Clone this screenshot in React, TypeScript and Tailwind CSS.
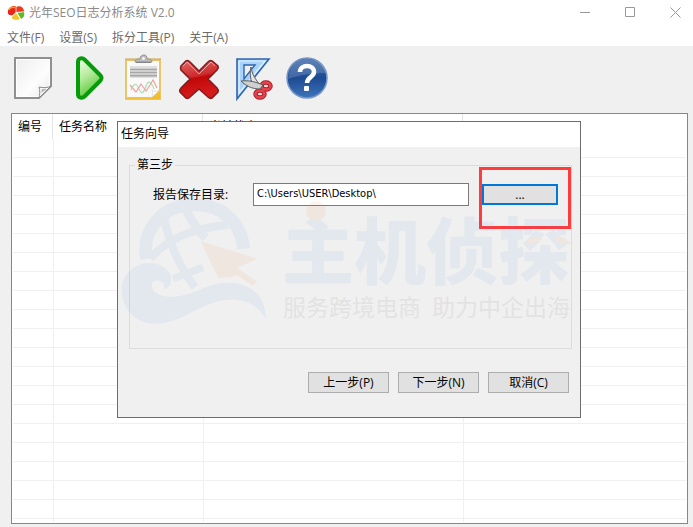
import { useState } from "react";

const menus = ["文件(F)", "设置(S)", "拆分工具(P)", "关于(A)"];
const columns = ["编号", "任务名称", "当前状态", ""];

function AppLogo() {
  return (
    <svg className="h-4 w-[18px]" viewBox="0 0 18 16">
      <path d="M1 6C2 1 8 0 9 2l0 5-3 3C2 11 0 9 1 6z" fill="#e8261c" />
      <path d="M9 2c5-2 8 1 8 5L9 7z" fill="#ee3a1c" />
      <path d="M10 7.500l7-.500c1 4-1 6-3 7z" fill="#5dbb22" />
      <path d="M9 8l4 6c-4 2-9 0-8-2z" fill="#f6c51b" />
      <path d="M9 2v5.500M9 7.500l8-.800M9 7.500L5 11.500M9.500 7.500l4.500 7" stroke="#fff" strokeWidth="0.7" fill="none" />
      <path d="M2 5c1-3 4-3 6-2.500" stroke="#ffa51f" strokeWidth="1.500" fill="none" />
    </svg>
  );
}

function PageIcon() {
  return (
    <>
      <defs>
        <linearGradient id="page" x1="0" y1="0" x2="1" y2="1">
          <stop offset="0" stopColor="#eee" />
          <stop offset="0.6" stopColor="#fdfdfd" />
          <stop offset="1" stopColor="#e6e6e6" />
        </linearGradient>
      </defs>
      <path d="M4 3h36v28L28 43H4z" fill="url(#page)" stroke="#909090" strokeWidth="2" />
      <path d="M5.500 4.500h33v26L27.500 41.500h-22z" fill="none" stroke="#fff" strokeWidth="1" />
      <path d="M28 43c1-3 1-8 0-11 4 1 9 1 12-1L28 43z" fill="#f6f6f6" stroke="#8a8a8a" strokeWidth="1" />
      <path d="M30 38l1-4h5z" fill="#b8b8b8" />
    </>
  );
}

function PlayIcon() {
  return (
    <>
      <defs>
        <linearGradient id="play" x1="0" y1="0" x2="0.4" y2="1">
          <stop offset="0" stopColor="#f4fff0" />
          <stop offset="0.5" stopColor="#b5eb9c" />
          <stop offset="1" stopColor="#58c936" />
        </linearGradient>
      </defs>
      <path
        d="M12 7c0-4 4-5 7-2l15 15c2 2 2 4 0 6L19 41c-3 3-7 2-7-2z"
        fill="url(#play)"
        stroke="#079a0b"
        strokeWidth="4"
        strokeLinejoin="round"
      />
    </>
  );
}

function ReportIcon() {
  return (
    <>
      <rect x="5" y="5" width="34" height="39" fill="#f9f9f9" stroke="#e9c468" strokeWidth="2" />
      <path d="M4 4h36" stroke="#c9a95d" strokeWidth="1" />
      <path d="M6 43h28" stroke="#f5c431" strokeWidth="2" />
      <path d="M39 34v10H29z" fill="#f2bd2c" />
      <path d="M30 43c2-3 2-5 1-8 3 2 5 2 8 0z" fill="#fff" stroke="#d4d4d4" strokeWidth="0.6" />
      <path d="M15 5h15v3H15z" fill="#777" />
      <path d="M14 7c0-3 3-3 5-3 0-3 2-4 4-4s3 1 3 4c2 0 5 0 5 3z" fill="#bcbcbc" stroke="#929292" />
      <circle cx="22.500" cy="3.500" r="1.300" fill="#fff" />
      <path d="M9 12h27M9 22h27" stroke="#c4c4c4" />
      <path d="M9 14.500h27M9 17.500h27M9 20.500h27" stroke="#a6a6a6" strokeWidth="2" />
      <path d="M10 35c3-7 5-8 8-1s5 3 7-3 5-5 8 3" stroke="#a5dfb0" strokeWidth="1.200" fill="none" />
      <path d="M9 30l6 7 5-8 5 7 4-6 3-5 4 8" stroke="#f0a0a0" strokeWidth="1.200" fill="none" />
    </>
  );
}

function DeleteIcon() {
  return (
    <>
      <defs>
        <linearGradient id="cross" x1="0" y1="0" x2="0.2" y2="1">
          <stop offset="0" stopColor="#e66a6a" />
          <stop offset="0.48" stopColor="#cb2929" />
          <stop offset="0.52" stopColor="#c10808" />
          <stop offset="1" stopColor="#d61b1b" />
        </linearGradient>
      </defs>
      <path
        d="M5 11l5-5q2-1 4 1l9 9 9-9q2-2 4-1l6 5q1 2-1 4l-9 9 9 9q2 2 1 4l-6 6q-2 1-4-1l-9-8-9 8q-2 2-4 1l-6-6q-1-2 1-4l9-9-9-9q-1-2 0-4z"
        fill="url(#cross)"
        stroke="#811e23"
        strokeWidth="1.600"
      />
      <path d="M7 11l4-4 12 12L35 7l4 4" fill="none" stroke="#f1a7a7" strokeWidth="1" />
    </>
  );
}

function CutIcon() {
  return (
    <>
      <path d="M6 4h32L6 44z" fill="#a9d3fb" stroke="#2d65ae" strokeWidth="1.600" />
      <path d="M8 6h26L8 38z" fill="none" stroke="#e2f2ff" strokeWidth="1.200" />
      <path d="M13 10h11L13 24z" fill="#f0f0f0" stroke="#2d65ae" strokeWidth="1.400" />
      <ellipse cx="35" cy="31" rx="4.500" ry="3.500" fill="#f0dcdc" stroke="#a81c26" strokeWidth="4.500" />
      <ellipse cx="29" cy="39" rx="4.500" ry="3.500" fill="#f0dcdc" stroke="#a81c26" strokeWidth="4.500" />
      <ellipse cx="35" cy="31" rx="4.500" ry="3.500" fill="none" stroke="#e8434c" strokeWidth="2.500" />
      <ellipse cx="29" cy="39" rx="4.500" ry="3.500" fill="none" stroke="#e8434c" strokeWidth="2.500" />
      <path d="M20 12c1 7 4 12 10 19l-4 4c-6-6-8-14-6-23z" fill="#e4e4e4" stroke="#5b5b5b" strokeWidth="1" />
      <path d="M10 26c8-1 15 1 22 4l-3 4c-8 0-14-3-19-8z" fill="#cfcfcf" stroke="#5b5b5b" strokeWidth="1" />
    </>
  );
}

function HelpIcon() {
  return (
    <>
      <defs>
        <linearGradient id="help" x1="0" y1="0" x2="0" y2="1">
          <stop offset="0" stopColor="#3f6cab" />
          <stop offset="0.5" stopColor="#1d4a93" />
          <stop offset="1" stopColor="#3d74ba" />
        </linearGradient>
      </defs>
      <circle cx="21" cy="23" r="20" fill="url(#help)" stroke="#7797c5" strokeWidth="1.500" />
      <path d="M2 24C3 10 12 4 21 4s17 5 19 14C27 18 13 20 2 24z" fill="#fff" opacity="0.16" />
      <path d="M14 17c0-8 14-8 14 0 0 5-7 5-7 11" fill="none" stroke="#fff" strokeWidth="4.500" />
      <rect x="18" y="31" width="5" height="5" rx="1" fill="#fff" />
    </>
  );
}

const tools = [
  { label: "新建任务", Icon: PageIcon },
  { label: "开始", Icon: PlayIcon },
  { label: "查看报告", Icon: ReportIcon },
  { label: "删除", Icon: DeleteIcon },
  { label: "拆分", Icon: CutIcon },
  { label: "帮助", Icon: HelpIcon },
];

function Watermark() {
  return (
    <div
      aria-hidden="true"
      className="pointer-events-none absolute left-[-3px] top-[68px] flex items-start opacity-[0.08]"
    >
      <svg className="h-[140px] w-[160px] shrink-0" viewBox="0 0 480 420">
        <g fill="none" stroke="#4a90e2">
          <path d="M94 206C80 120 140 44 240 44c85 0 140 60 146 132" strokeWidth="38" />
          <path d="M148 85c15 80 45 145 92 207" strokeWidth="24" />
          <path d="M208 48c14 32 32 66 64 96" strokeWidth="26" />
          <path d="M105 206c55-60 120-90 235-102" strokeWidth="24" />
          <path d="M174 266l90-34" strokeWidth="22" />
        </g>
        <path
          d="M20 300C20 250 62 218 106 219c44 1 68 34 61 58-3 11-12 20-19 21 2-18-10-28-22-27-14 1-20 12-13 26 20 36 92 26 147-1 80-38 192-20 192 90-42-72-122-68-190-35-48 23-90 50-142 50C58 401 20 352 20 300z"
          fill="#4a90e2"
        />
        <path d="M256 153l170 53-60 28 60 40-13 13-46-31-17 5-40 3z" fill="#ef7d28" />
      </svg>
      <div className="relative ml-[7px] pt-6 whitespace-nowrap">
        <svg className="absolute left-0 top-0 h-[70px] w-[292px]" viewBox="0 0 292 70">
          <circle cx="34" cy="21" r="10" fill="#ef7d28" />
          <path d="M243 54q8-12 17-5-6 6-17 5zM289 54q-10-12-17-5 6 6 17 5z" fill="#ef7d28" />
        </svg>
        <div className="text-[72px] leading-[72px] font-black text-[#4a90e2]">主机侦探</div>
        <div className="mt-1 flex gap-[11px] pl-px text-[23px] leading-[34px] text-[#4d4d4d]">
          <span>服务跨境电商</span>
          <span>助力中企出海</span>
        </div>
      </div>
    </div>
  );
}

function TaskWizard() {
  const [path, setPath] = useState("C:\\Users\\USER\\Desktop\\");

  return (
    <div
      role="dialog"
      aria-labelledby="wizard-title"
      className="absolute left-[117px] top-[121px] w-[464px] border border-[#6d6d6d] bg-[#f0f0f0]"
    >
      <h2 id="wizard-title" className="h-[25px] bg-white pl-[3px] leading-[23px]">
        任务向导
      </h2>
      <fieldset className="mt-[9px] mr-2 ml-[11px] min-h-[193px] border border-[#dcdcdc] pr-[13px] pl-[23px]">
        <legend className="-ml-[18px] px-[2px] leading-[18px]">第三步</legend>
        <div className="flex items-center pt-[9px]">
          <label htmlFor="save-path" className="w-[100px] shrink-0 leading-4">
            报告保存目录:
          </label>
          <input
            id="save-path"
            type="text"
            value={path}
            onChange={(e) => setPath(e.target.value)}
            className="h-[23px] min-w-0 flex-1 border border-[#7a7a7a] bg-white px-[3px] pb-[3px] font-['DejaVu_Sans_Condensed','Open_Sans',sans-serif] text-[11px] outline-none"
          />
          <span className="relative ml-[13px] flex">
            <button
              type="button"
              aria-label="浏览"
              className="h-[21px] w-[76px] border-2 border-[#0078d7] bg-[#e1e1e1] leading-4"
            >
              ...
            </button>
            <span className="pointer-events-none absolute -top-[17px] -left-[3px] h-[62px] w-[92px] border-3 border-[#ff3b3b]" />
          </span>
        </div>
      </fieldset>
      <div className="mt-[23px] flex justify-end gap-[9px] pr-[11px] pb-6">
        {["上一步(P)", "下一步(N)", "取消(C)"].map((label) => (
          <button
            key={label}
            type="button"
            className="h-[21px] w-[81px] border border-[#adadad] bg-[#e1e1e1] leading-4"
          >
            {label}
          </button>
        ))}
      </div>
      <Watermark />
    </div>
  );
}

export default function App() {
  return (
    <main className="relative flex h-screen flex-col overflow-hidden bg-[#f0f0f0] font-['Open_Sans','Noto_Sans_CJK_SC',sans-serif] text-[12px] text-black">
      {/* Title bar */}
      <header className="flex h-[29px] shrink-0 items-center bg-white pr-3 pb-1 pl-[7px]">
        <AppLogo />
        <h1 className="ml-1 flex-1 text-[#8a8a8a]">光年SEO日志分析系统 V2.0</h1>
        <div className="flex gap-[34px] text-[#999]">
          <button type="button" aria-label="最小化">
            <svg className="size-[11px]" viewBox="0 0 11 11">
              <path d="M0 5.500h10" stroke="currentColor" />
            </svg>
          </button>
          <button type="button" aria-label="最大化">
            <svg className="size-[11px]" viewBox="0 0 11 11">
              <path d="M.5.500h9v9h-9z" fill="none" stroke="currentColor" />
            </svg>
          </button>
          <button type="button" aria-label="关闭">
            <svg className="size-[11px]" viewBox="0 0 11 11">
              <path d="M.5.500l10 10M10.500.500l-10 10" stroke="currentColor" />
            </svg>
          </button>
        </div>
      </header>
      <nav className="flex h-[17px] shrink-0 items-center gap-[15px] bg-white pl-[7px] text-[#6a6a6a]">
        {menus.map((menu) => (
          <button key={menu} type="button" className="leading-4">
            {menu}
          </button>
        ))}
      </nav>

      {/* Toolbar */}
      <div className="flex h-[67px] shrink-0 items-start gap-[11px] pt-[9px] pl-[11px]">
        {tools.map(({ label, Icon }) => (
          <button key={label} type="button" aria-label={label}>
            <svg className="h-[46px] w-[44px] overflow-visible" viewBox="0 0 44 46">
              <Icon />
            </svg>
          </button>
        ))}
      </div>

      {/* Task list */}
      <div className="mr-[5px] mb-[3px] ml-[11px] min-h-0 flex-1 overflow-hidden border border-[#828790] bg-white px-px">
        <table className="w-full table-fixed border-separate border-spacing-0">
          <colgroup>
            <col className="w-[41px]" />
            <col className="w-[150px]" />
            <col className="w-[260px]" />
            <col />
          </colgroup>
          <thead>
            <tr>
              {columns.map((name, i) => (
                <th key={i} className="h-[25px] p-0 text-left font-normal">
                  <div
                    className={
                      i < 3
                        ? "mr-px h-[25px] border-r border-[#e5e5e5] pl-[5px] leading-[26px] whitespace-nowrap"
                        : "h-[25px]"
                    }
                  >
                    {name}
                  </div>
                </th>
              ))}
            </tr>
          </thead>
          <tbody>
            {Array.from({ length: 20 }, (_, row) => (
              <tr key={row}>
                {columns.map((_, i) => (
                  <td
                    key={i}
                    className={
                      i < 3
                        ? "h-[19px] border-r border-b border-[#f0f0f0] p-0"
                        : "h-[19px] border-b border-[#f0f0f0] p-0"
                    }
                  />
                ))}
              </tr>
            ))}
            <tr>
              {columns.map((_, i) => (
                <td key={i} className={i < 3 ? "h-[3px] border-r border-[#f0f0f0] p-0" : "h-[3px] p-0"} />
              ))}
            </tr>
          </tbody>
        </table>
      </div>

      <TaskWizard />
    </main>
  );
}
